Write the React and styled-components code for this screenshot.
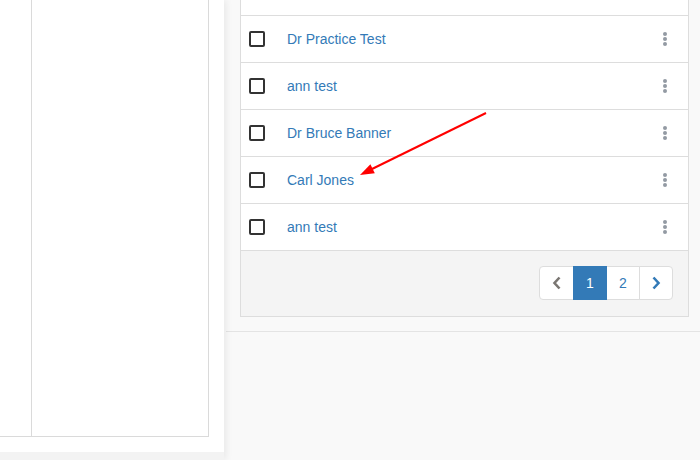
import React from "react";
import styled, { createGlobalStyle } from "styled-components";

const Global = createGlobalStyle`
  html, body { margin: 0; padding: 0; }
  body {
    background: #f9f9f9;
    font-family: "Liberation Sans", Arial, Helvetica, sans-serif;
    font-size: 14px;
    color: #333;
  }
`;

const Page = styled.div`
  position: relative;
  display: flex;
  width: 700px;
  height: 460px;
  overflow: hidden;
`;

const LeftPane = styled.aside`
  width: 224px;
  flex: none;
  display: flex;
  flex-direction: column;
  background: #fff;
  box-shadow: 2px 0 7px rgba(0, 0, 0, 0.07);
  z-index: 1;
`;

const LeftBox = styled.div`
  flex: 1;
  display: flex;
  margin: 0 15px 15px -20px;
  border: 1px solid #dadada;
  border-top: none;
`;

const LeftCol = styled.div`
  width: ${(p) => p.$w || "auto"};
  flex: ${(p) => (p.$w ? "none" : "1")};
  border-right: ${(p) => (p.$divider ? "1px solid #dadada" : "none")};
  background: #fff;
`;

const GrayBand = styled.div`
  height: 8px;
  background: #f3f3f3;
`;

const RightPane = styled.main`
  flex: 1;
  display: flex;
  flex-direction: column;
  background: #f9f9f9;
`;

const Content = styled.section`
  padding: 0 11px 14px 16px;
`;

const Card = styled.div`
  margin-top: -31px;
  background: #fff;
  border: 1px solid #dddddd;
  border-top: none;
`;

const Row = styled.div`
  display: flex;
  align-items: center;
  height: 46px;
  padding: 0 21px 0 8px;
  border-bottom: 1px solid #dddddd;
`;

const Check = styled.span`
  width: 12px;
  height: 12px;
  border: 2px solid #333;
  border-radius: 2px;
  flex: none;
  background: #fff;
`;

const NameLink = styled.a`
  margin-left: 22px;
  color: #337ab7;
  text-decoration: none;
  font-size: 14px;
  line-height: 20px;
`;

const Kebab = styled.span`
  margin-left: auto;
  display: flex;
  flex-direction: column;
  gap: 1px;
`;

const Dot = styled.i`
  display: block;
  width: 4px;
  height: 4px;
  border-radius: 50%;
  background: #939aa3;
`;

const CardFooter = styled.div`
  display: flex;
  justify-content: flex-end;
  height: 50px;
  padding: 15px 15px 0 0;
  background: #f4f4f4;
`;

const Pager = styled.ul`
  display: flex;
  list-style: none;
  margin: 0;
  padding: 0;
  height: 34px;
`;

const PageItem = styled.li`
  width: ${(p) => p.$w || 34}px;
  height: 34px;
  box-sizing: border-box;
  display: flex;
  align-items: center;
  justify-content: center;
  margin-left: -1px;
  border: 1px solid ${(p) => (p.$active ? "#337ab7" : "#dddddd")};
  background: ${(p) => (p.$active ? "#337ab7" : "#fff")};
  color: ${(p) => (p.$active ? "#fff" : "#337ab7")};
  font-size: 14px;
  position: relative;
  z-index: ${(p) => (p.$active ? 2 : 1)};
  &:first-child {
    margin-left: 0;
    border-radius: 4px 0 0 4px;
  }
  &:last-child {
    border-radius: 0 4px 4px 0;
  }
`;

const BottomArea = styled.div`
  flex: 1;
  border-top: 1px solid #e4e4e4;
  margin-left: 2px;
`;

const Overlay = styled.svg`
  position: absolute;
  left: 0;
  top: 0;
  pointer-events: none;
  z-index: 5;
`;

const Chevron = ({ dir, color }) => (
  <svg width="10" height="14" viewBox="0 0 10 14">
    <polyline
      points={dir === "left" ? "7.5,1.5 2.5,7 7.5,12.5" : "2.5,1.5 7.5,7 2.5,12.5"}
      fill="none"
      stroke={color}
      strokeWidth="2.6"
    />
  </svg>
);

const people = ["Dr Practice Test", "ann test", "Dr Bruce Banner", "Carl Jones", "ann test"];

export default function App() {
  return (
    <>
      <Global />
      <Page>
        <LeftPane>
          <LeftBox>
            <LeftCol $w="50px" $divider />
            <LeftCol />
          </LeftBox>
          <GrayBand />
        </LeftPane>
        <RightPane>
          <Content>
            <Card>
              <Row />
              {people.map((name, i) => (
                <Row key={i}>
                  <Check />
                  <NameLink href="#">{name}</NameLink>
                  <Kebab>
                    <Dot />
                    <Dot />
                    <Dot />
                  </Kebab>
                </Row>
              ))}
              <CardFooter>
                <Pager>
                  <PageItem $w={35}>
                    <Chevron dir="left" color="#7a7672" />
                  </PageItem>
                  <PageItem $active>1</PageItem>
                  <PageItem>2</PageItem>
                  <PageItem>
                    <Chevron dir="right" color="#337ab7" />
                  </PageItem>
                </Pager>
              </CardFooter>
            </Card>
          </Content>
          <BottomArea />
        </RightPane>
        <Overlay width="700" height="460" viewBox="0 0 700 460">
          <line x1="486" y1="113" x2="372" y2="169" stroke="#f00" strokeWidth="2" />
          <polygon points="360,175 370.4,164.3 374.8,173.3" fill="#f00" />
        </Overlay>
      </Page>
    </>
  );
}
